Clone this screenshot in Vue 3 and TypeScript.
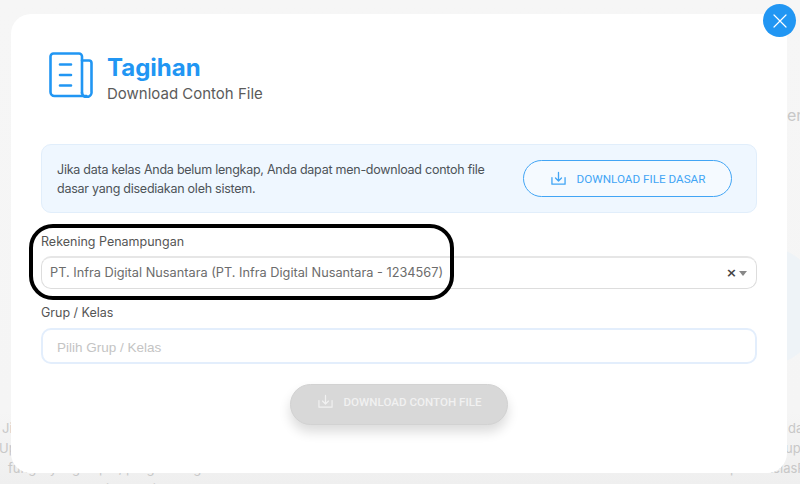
<script setup lang="ts">
const backdropLines = [
  { left: "Jika data", right: "agar data", pad: 3, end: 25 },
  { left: "Upload file", right: "tombol upload", pad: 0, end: 13 },
  { left: "fungsi yang dapat, program tagihan", right: "pada KelasPintar", pad: 9, end: 7 },
];
</script>

<template>
  <div class="page">
    <div class="backdrop">
      <span class="edge-text">er</span>
      <div class="backdrop-shape"></div>
      <div class="backdrop-text">
        <p
          v-for="line in backdropLines"
          :key="line.left"
          :style="{ paddingLeft: line.pad + 'px', paddingRight: line.end + 'px' }"
        >
          <span>{{ line.left }}</span>
          <span>{{ line.right }}</span>
        </p>
        <p class="closing">Terima kasih</p>
      </div>
    </div>

    <section class="modal">
      <header class="head">
        <svg class="head-icon" width="44" height="46" viewBox="0 0 44 46" fill="none" stroke="#2196f3" stroke-width="2.6" stroke-linecap="round" stroke-linejoin="round">
          <path d="M33 41V4.5A3 3 0 0 0 30 1.5H4.5A3 3 0 0 0 1.5 4.5V40A4 4 0 0 0 5.5 44H37.5" />
          <path d="M33 8.5H40A2.5 2.5 0 0 1 42.5 11V39.5A4.5 4.5 0 0 1 33 41" />
          <path d="M11 12.5H22M11 23H22M11 33.5H22" />
        </svg>
        <div>
          <h1>Tagihan</h1>
          <p>Download Contoh File</p>
        </div>
      </header>

      <div class="info">
        <p>Jika data kelas Anda belum lengkap, Anda dapat men-download contoh file dasar yang disediakan oleh sistem.</p>
        <button class="btn-outline" type="button">
          <svg width="15" height="15" viewBox="0 0 16 15" fill="none" stroke="currentColor" stroke-width="1.4" stroke-linecap="round" stroke-linejoin="round">
            <path d="M1 6.5V13.5H15V6.5" />
            <path d="M8 1V10M4.8 7L8 10.2L11.2 7" />
          </svg>
          DOWNLOAD FILE DASAR
        </button>
      </div>

      <label class="field-label first">Rekening Penampungan</label>
      <div class="select">
        <span class="select-value">PT. Infra Digital Nusantara (PT. Infra Digital Nusantara - 1234567)</span>
        <span class="select-clear">×</span>
        <span class="select-caret"></span>
      </div>

      <label class="field-label second">Grup / Kelas</label>
      <div class="input">Pilih Grup / Kelas</div>

      <div class="actions">
        <button class="btn-solid" type="button" disabled>
          <svg width="15" height="15" viewBox="0 0 16 15" fill="none" stroke="currentColor" stroke-width="1.3" stroke-linecap="round" stroke-linejoin="round">
            <path d="M1 6.5V13.5H15V6.5" />
            <path d="M8 1V10M4.8 7L8 10.2L11.2 7" />
          </svg>
          DOWNLOAD CONTOH FILE
        </button>
      </div>
    </section>

    <button class="close" type="button" aria-label="Tutup">
      <svg width="14" height="14" viewBox="0 0 14 14" stroke="#fff" stroke-width="1.2" stroke-linecap="round">
        <path d="M1 1L13 13M13 1L1 13" />
      </svg>
    </button>

    <div class="callout"></div>
  </div>
</template>

<style scoped>
.page {
  position: relative;
  width: 800px;
  height: 484px;
  overflow: hidden;
  background: linear-gradient(#f6f6f6, #f5f5f5 85%, #efefef);
  font-family: Inter, "Noto Sans", sans-serif;
  color: #555;
}
.backdrop {
  position: absolute;
  inset: 0;
  color: #c8c8c8;
  font-size: 13px;
}
.edge-text {
  position: absolute;
  left: 787px;
  top: 105px;
  font-size: 16px;
}
.backdrop-text {
  position: absolute;
  left: -1px;
  right: -40px;
  top: 418px;
  white-space: nowrap;
}
.backdrop-text p {
  display: flex;
  justify-content: space-between;
  margin: 0;
  height: 20px;
  line-height: 20px;
}
.backdrop-text .closing {
  padding-left: 87px;
  padding-top: 1px;
}
.backdrop-shape {
  position: absolute;
  left: 702px;
  top: 246px;
  width: 120px;
  height: 120px;
  border-radius: 50%;
  background: #eef3f7;
}
.modal {
  position: relative;
  width: 716px;
  height: 459px;
  margin: 14px 0 0 11px;
  padding: 0 30px;
  background: #fff;
  border-radius: 20px;
}
.head {
  display: flex;
  align-items: flex-start;
  gap: 14px;
  height: 130px;
  padding: 38px 0 0 8px;
  box-sizing: border-box;
}
.head-icon {
  flex: none;
}
h1 {
  margin: 1px 0 0;
  font-size: 24px;
  line-height: 30px;
  font-weight: 700;
  color: #2196f3;
}
.head p {
  margin: 1px 0 0;
  font-size: 15px;
  line-height: 20px;
  color: #5b5b5b;
}
.info {
  display: flex;
  align-items: center;
  justify-content: space-between;
  height: 69px;
  box-sizing: border-box;
  padding: 0 24px 0 15px;
  background: #eff7ff;
  border: 1px solid #e1eefb;
  border-radius: 10px;
}
.info p {
  width: 440px;
  margin: 0;
  font-size: 12.5px;
  letter-spacing: -0.25px;
  line-height: 19px;
  color: #4d5358;
}
.btn-outline {
  display: flex;
  align-items: center;
  justify-content: center;
  gap: 11px;
  flex: none;
  width: 209px;
  height: 37px;
  padding: 0 0 0 1px;
  background: #f5faff;
  border: 1px solid #42a5f5;
  border-radius: 19px;
  color: #42a5f5;
  font-family: Roboto, sans-serif;
  font-size: 11.7px;
  font-weight: 400;
}
.field-label {
  display: block;
  font-size: 12.5px;
  line-height: 16px;
  color: #555;
}
.field-label.first {
  margin-top: 21px;
  margin-bottom: 6px;
}
.field-label.second {
  margin-top: 16px;
  margin-bottom: 7px;
}
.select {
  display: flex;
  align-items: center;
  height: 33px;
  box-sizing: border-box;
  padding: 0 9px 2px 8px;
  border: 1px solid #ddd;
  border-top-width: 2px;
  border-top-color: #e6e6e6;
  border-radius: 10px;
  background: #fff;
}
.select-value {
  flex: 1;
  font-size: 12.75px;
  color: #6c6c6c;
}
.select-clear {
  margin-right: 2px;
  font-family: "DejaVu Sans", sans-serif;
  font-size: 13px;
  font-weight: 700;
  color: #444;
}
.select-caret {
  width: 0;
  height: 0;
  margin-top: 3px;
  border-left: 4px solid transparent;
  border-right: 4px solid transparent;
  border-top: 5px solid #888;
}
.input {
  height: 36px;
  box-sizing: border-box;
  padding-left: 14px;
  border: 2px solid #e3eefc;
  border-radius: 10px;
  font-family: "Liberation Sans", sans-serif;
  font-size: 13.5px;
  line-height: 36px;
  color: #c4c4c4;
}
.actions {
  display: flex;
  justify-content: center;
  margin-top: 20px;
}
.btn-solid {
  display: flex;
  align-items: center;
  justify-content: center;
  gap: 11px;
  width: 218px;
  height: 41px;
  padding: 0 0 6px 1px;
  background: #d8d8d8;
  border: 1px solid #d2d2d2;
  border-radius: 21px;
  box-shadow: 0 7px 12px rgba(0, 0, 0, 0.14);
  color: #f1f1f1;
  font-family: Roboto, sans-serif;
  font-size: 11.6px;
  font-weight: 500;
}
.close {
  position: absolute;
  left: 763px;
  top: 4px;
  display: flex;
  align-items: center;
  justify-content: center;
  width: 33px;
  height: 33px;
  padding: 0;
  border: 0;
  border-radius: 50%;
  background: #2196f3;
}
.callout {
  position: absolute;
  left: 29px;
  top: 224px;
  width: 425px;
  height: 76px;
  box-sizing: border-box;
  border: 4px solid #000;
  border-radius: 24px;
}
</style>
